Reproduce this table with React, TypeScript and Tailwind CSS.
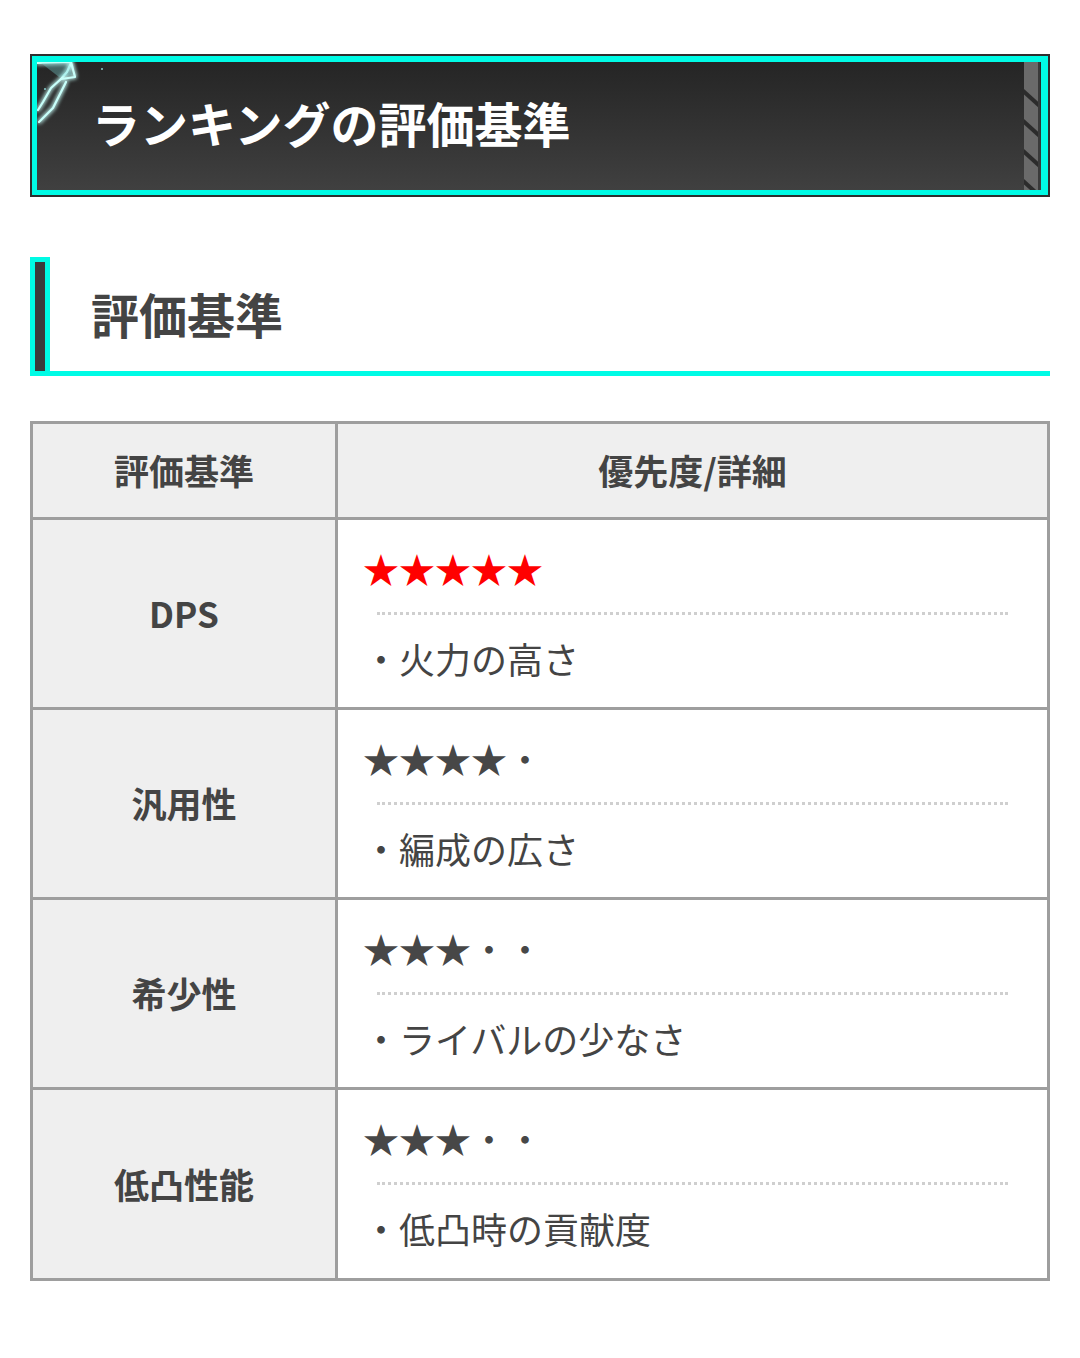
import React from 'react';

const font = { fontFamily: '"Noto Sans CJK JP", "Noto Sans", sans-serif' };

type Row = {
  label: string;
  stars: number;
  red?: boolean;
  detail: string;
};

const rows: Row[] = [
  { label: 'DPS', stars: 5, red: true, detail: '火力の高さ' },
  { label: '汎用性', stars: 4, detail: '編成の広さ' },
  { label: '希少性', stars: 3, detail: 'ライバルの少なさ' },
  { label: '低凸性能', stars: 3, detail: '低凸時の貢献度' },
];

// lightning decoration in the top-left of the title bar
const Spark = () => (
  <svg width="48" height="70" viewBox="0 0 48 70" className="absolute left-0 top-0">
    <defs>
      <filter id="glow" x="-50%" y="-50%" width="200%" height="200%">
        <feGaussianBlur stdDeviation="2" result="b" />
        <feMerge>
          <feMergeNode in="b" />
          <feMergeNode in="b" />
          <feMergeNode in="SourceGraphic" />
        </feMerge>
      </filter>
    </defs>
    <g filter="url(#glow)" fill="none" stroke="#c8fffa" strokeWidth="2.2" strokeLinejoin="round" strokeLinecap="round">
      <path d="M0 1 L34 0 L38 15 L24 17 L14 26 L6 40 L1 48" />
      <path d="M34 1 L30 10 L24 17" />
      <path d="M29 20 L22 34 L16 46 L8 54 L2 60" />
    </g>
    <path d="M4 1 L32 1 L35 13 L22 15 Z" fill="#7fd8d6" opacity="0.35" />
  </svg>
);

// slanted stripes at the right edge of the title bar
const Stripes = () => (
  <svg width="16" height="128" viewBox="0 0 16 128" className="block">
    <rect width="16" height="128" fill="#6a6a6a" />
    <g stroke="#2c2c2c" strokeWidth="4">
      <line x1="-2" y1="28" x2="18" y2="46" />
      <line x1="-2" y1="58" x2="18" y2="76" />
      <line x1="-2" y1="88" x2="18" y2="106" />
      <line x1="-2" y1="118" x2="18" y2="136" />
    </g>
    <rect x="14" width="2" height="128" fill="#3a3a3a" />
  </svg>
);

const Stars = ({ count, red }: { count: number; red?: boolean }) => (
  <div className={`text-[36px] leading-[40px] ${red ? 'text-[#ff0000]' : 'text-[#474747]'}`}>
    {'★'.repeat(count)}
    {'・'.repeat(5 - count)}
  </div>
);

export default function App() {
  return (
    <div className="bg-white w-[1080px] min-h-[1358px] px-[30px] pt-[54px]" style={font}>
      {/* title bar */}
      <div className="border-2 border-[#2e2e2e]">
        <div className="border-[5px] border-[#00fbe5] border-t-[6px] border-r-[7px]">
          <div className="relative flex h-[128px] items-center bg-gradient-to-b from-[#252525] to-[#404040] pl-[55px]">
            <Spark />
            <span className="absolute left-[64px] top-[6px] h-[2px] w-[2px] rounded-full bg-[#8cc]" />
            <span className="absolute left-[7px] top-[26px] h-[2px] w-[2px] rounded-full bg-[#8cc]" />
            <h1 className="flex-1 pb-[9px] text-[48px] font-bold leading-none text-white">ランキングの評価基準</h1>
            <div className="mr-[1px] self-stretch">
              <Stripes />
            </div>
          </div>
        </div>
      </div>

      {/* section heading */}
      <div className="mt-[60px] flex h-[119px] border-b-[5px] border-[#00fbe5]">
        <div className="w-[20px] bg-[#00fbe5] px-[5px] pt-[5px]">
          <div className="h-full bg-[#3b3b3b]" />
        </div>
        <h2 className="flex items-center pl-[41px] pb-[2px] text-[48px] font-bold text-[#444]">評価基準</h2>
      </div>

      {/* criteria table */}
      <div className="mt-[45px] border-[3px] border-[#9e9e9e] text-[#444]">
        <div className="flex h-[96px] border-b-[3px] border-[#9e9e9e] bg-[#efefef]">
          <div className="flex w-[305px] items-center justify-center border-r-[3px] border-[#9e9e9e] text-[35px] font-bold">
            評価基準
          </div>
          <div className="flex flex-1 items-center justify-center text-[35px] font-bold">優先度/詳細</div>
        </div>
        {rows.map((r, i) => (
          <div
            key={r.label}
            className={`flex ${i < rows.length - 1 ? 'h-[190px] border-b-[3px] border-[#9e9e9e]' : 'h-[188px]'}`}
          >
            <div className="flex w-[305px] items-center justify-center border-r-[3px] border-[#9e9e9e] bg-[#efefef] text-[35px] font-bold">
              {r.label}
            </div>
            <div className="flex-1 px-[25px] pt-[28px]">
              <Stars count={r.stars} red={r.red} />
              <div className="mx-[14px] mt-[24px] border-t-[3px] border-dotted border-[#cfcfcf]" />
              <p className="mt-[16px] text-[36px] leading-[54px] text-[#444]">・{r.detail}</p>
            </div>
          </div>
        ))}
      </div>
    </div>
  );
}
